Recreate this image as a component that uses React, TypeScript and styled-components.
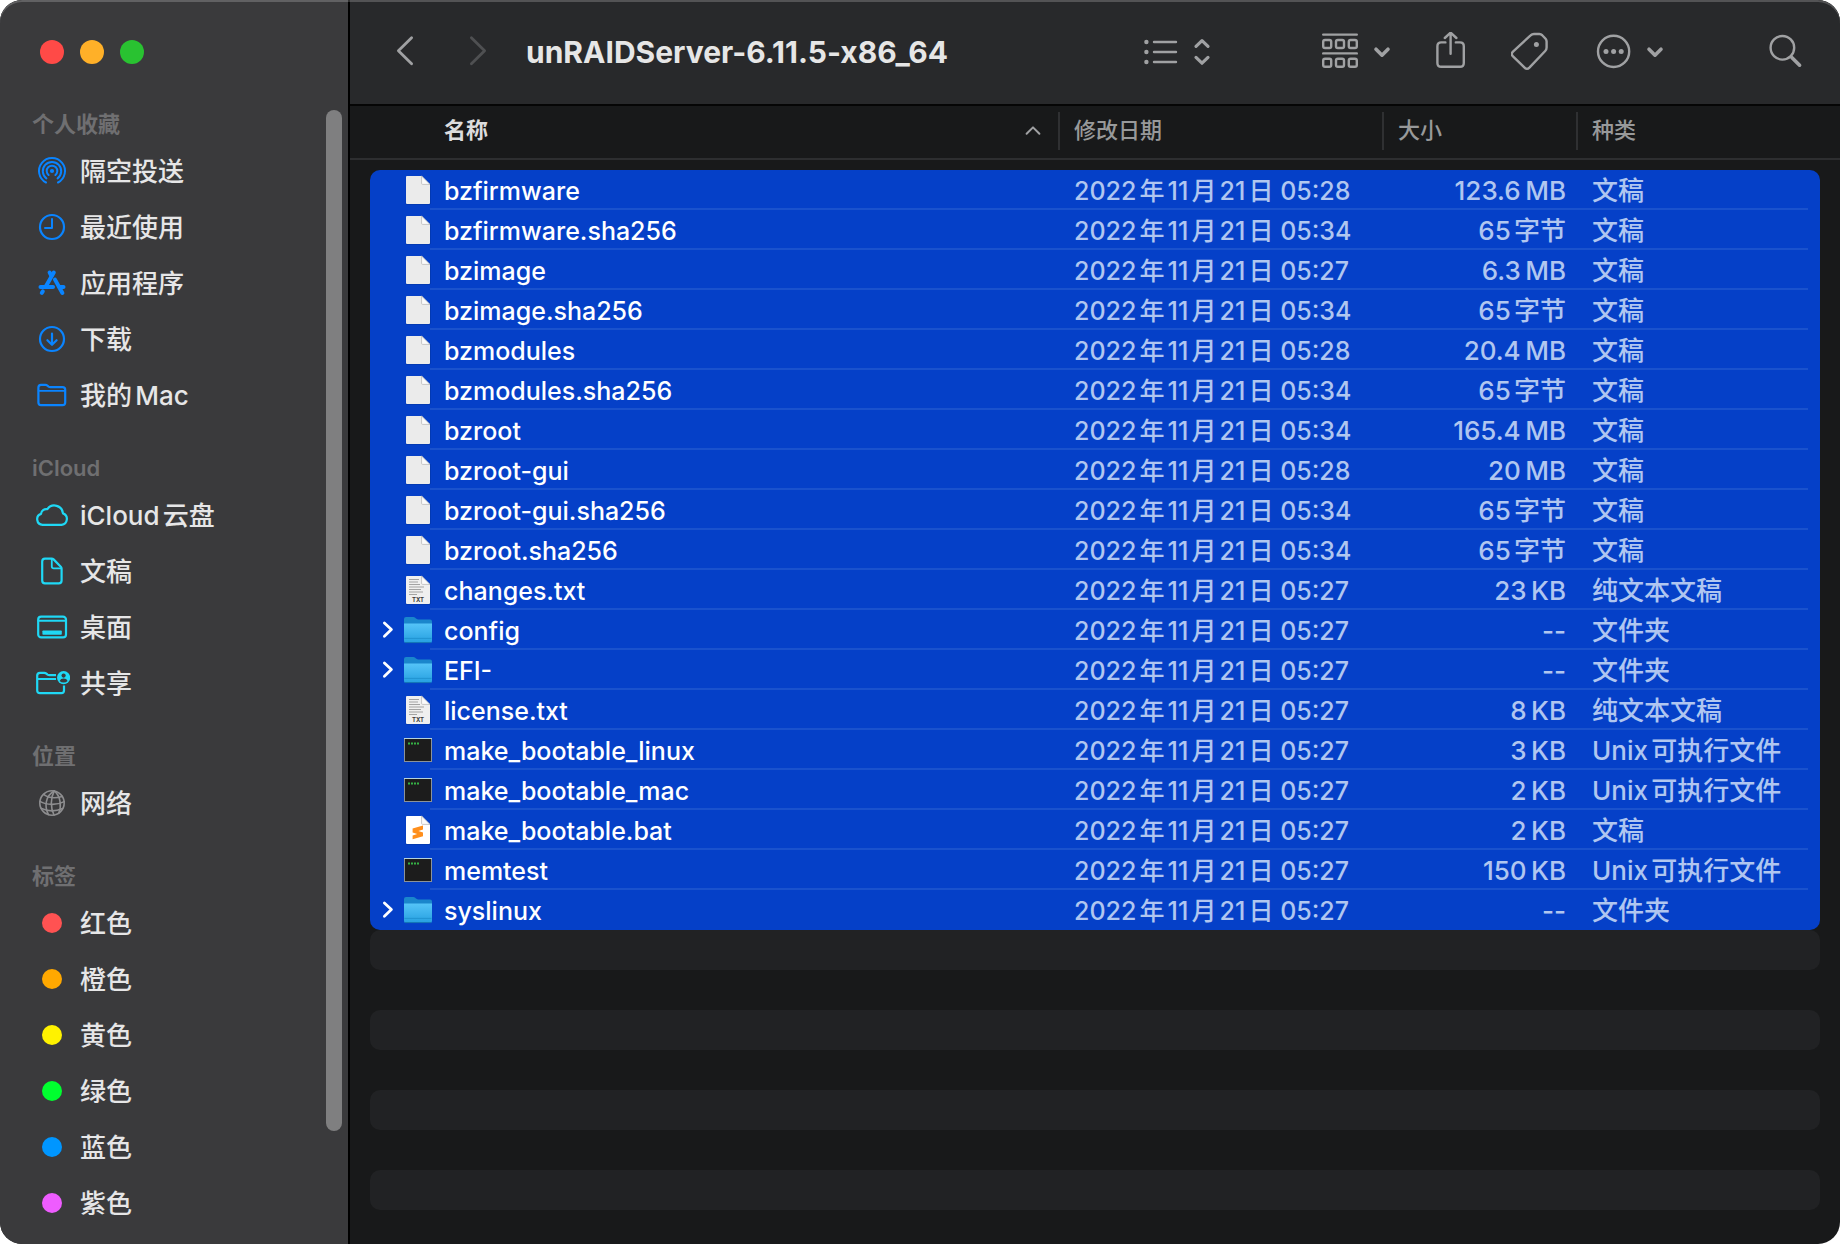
import React from "react";
import styled, { createGlobalStyle } from "styled-components";

const GlobalStyle = createGlobalStyle`
  *, *::before, *::after { box-sizing: border-box; }
  html, body { margin: 0; background: #fff; }
  body {
    font-family: Inter, "Noto Sans CJK SC", sans-serif;
    font-size: 25px;
    text-autospace: normal;
    -webkit-font-smoothing: antialiased;
  }
  button {
    font: inherit;
    color: inherit;
    background: none;
    border: 0;
    margin: 0;
    padding: 0;
    text-align: left;
  }
`;

/* ---------- window ---------- */

const Window = styled.div`
  position: relative;
  display: grid;
  grid-template-columns: 350px minmax(0, 1fr);
  min-height: 100vh;
  border-radius: 22px;
  overflow: hidden;
  background: #18191a;

  &::after {
    content: "";
    position: absolute;
    inset: 0;
    border-radius: inherit;
    box-shadow: inset 0 2px 0 rgba(255, 255, 255, 0.2);
    pointer-events: none;
  }
`;

/* ---------- sidebar ---------- */

const Sidebar = styled.aside`
  display: flex;
  flex-direction: column;
  background: #3a3a3c;
  border-right: 2px solid #000;
`;

const TrafficLights = styled.div`
  display: flex;
  gap: 16px;
  height: 110px;
  padding: 40px 40px 0;
`;

const Light = styled.button<{ $color: string }>`
  width: 24px;
  height: 24px;
  border-radius: 50%;
  background: ${(p) => p.$color};
`;

const SidebarBody = styled.div`
  display: flex;
  flex: 1;
  padding-right: 6px;
`;

const Nav = styled.nav`
  flex: 1;
  display: flex;
  flex-direction: column;
  gap: 31px;
`;

const SectionTitle = styled.h2`
  margin: 0 0 5px;
  padding-left: 32px;
  font-size: 22px;
  font-weight: 600;
  line-height: 28px;
  color: #6f6f71;
`;

const ItemList = styled.ul`
  list-style: none;
  margin: 0;
  padding: 0;
`;

const Item = styled.button`
  display: flex;
  align-items: center;
  gap: 10px;
  width: 100%;
  height: 56px;
  padding-left: 34px;
  font-size: 26px;
  font-weight: 500;
  color: #e6e6e7;
`;

const ItemLabel = styled.span`
  padding-bottom: 4px;
`;

const ItemIcon = styled.svg<{ $color: string }>`
  flex: none;
  width: 36px;
  height: 32px;
  color: ${(p) => p.$color};
  fill: none;
  stroke: currentColor;
  stroke-width: 2.2;
  stroke-linecap: round;
  stroke-linejoin: round;
`;

const TagDot = styled.span<{ $color: string }>`
  flex: none;
  width: 20px;
  height: 20px;
  margin: 0 8px;
  border-radius: 50%;
  background: ${(p) => p.$color};
`;

const ScrollTrack = styled.div`
  width: 16px;
`;

const ScrollThumb = styled.div`
  height: 90%;
  border-radius: 8px;
  background: #7f7f80;
`;

/* ---------- main pane ---------- */

const Main = styled.main`
  display: flex;
  flex-direction: column;
  min-width: 0;
`;

const Toolbar = styled.header`
  display: flex;
  align-items: center;
  height: 106px;
  padding: 0 36px 0 45px;
  background: #28292b;
  border-bottom: 2px solid #050505;
  color: #a0a1a3;
`;

const ToolGroup = styled.div<{ $gap: number }>`
  display: flex;
  align-items: center;
  gap: ${(p) => p.$gap}px;
`;

const ToolButton = styled.button`
  display: flex;
  align-items: center;
  gap: 14px;

  &:disabled {
    color: #4f5052;
  }
`;

const ToolIcon = styled.svg`
  display: block;
  fill: none;
  stroke: currentColor;
  stroke-width: 2.4;
  stroke-linecap: round;
  stroke-linejoin: round;
`;

const Title = styled.h1`
  flex: 1;
  margin: 0 0 0 38px;
  font-size: 30px;
  font-weight: 700;
  line-height: 40px;
  white-space: nowrap;
  color: #e6e6e6;
`;

const TrailingTools = styled.div`
  display: flex;
  align-items: center;
  gap: 104px;
`;

const FileTable = styled.table`
  display: block;
  font-weight: 500;
`;

const columns = "minmax(0, 1fr) 324px 194px 242px";

const TableHead = styled.thead`
  display: block;
  height: 54px;
  padding: 6px 20px 0;
  border-bottom: 2px solid #2d2e30;
`;

const HeadRow = styled.tr`
  display: grid;
  grid-template-columns: ${columns};
`;

const HeadCell = styled.th<{ $active?: boolean }>`
  display: flex;
  align-items: center;
  justify-content: space-between;
  height: 38px;
  padding: ${(p) => (p.$active ? "0 17px 2px 74px" : "0 0 2px 14px")};
  border-right: 2px solid #2f3032;
  font-size: 22px;
  font-weight: ${(p) => (p.$active ? 700 : 500)};
  line-height: 36px;
  color: ${(p) => (p.$active ? "#dcdcdd" : "#98999a")};

  &:last-child {
    border-right: 0;
  }
`;

const TableBody = styled.tbody`
  display: block;
  margin: 10px 20px 0;
  border-radius: 10px;
  background: #0540c8;
`;

const Row = styled.tr`
  display: grid;
  grid-template-columns: ${columns};
  height: 40px;
  background: linear-gradient(#1a52cd, #1a52cd) no-repeat 60px 100% /
    calc(100% - 72px) 2px;

  &:last-child {
    background: none;
  }
`;

const NameCell = styled.td`
  display: flex;
  align-items: center;
  padding: 0 0 0 10px;
  color: #fff;
`;

const FileName = styled.span`
  padding-top: 2px;
  line-height: 38px;
`;

const DisclosureSlot = styled.span`
  display: flex;
  width: 23px;
`;

const Disclosure = styled.button`
  display: flex;
  width: 16px;
  height: 20px;
`;

const FileIcon = styled.svg`
  flex: none;
  width: 30px;
  height: 30px;
  margin-right: 11px;
  overflow: visible;
`;

const Cell = styled.td<{ $align?: "right"; $large?: boolean }>`
  padding: ${(p) => (p.$align ? "2px 12px 0 0" : "2px 0 0 14px")};
  text-align: ${(p) => p.$align ?? "left"};
  font-size: ${(p) => (p.$large ? 26 : 25)}px;
  line-height: 38px;
  white-space: nowrap;
  color: #b0c6f0;
`;

const Stripes = styled.div`
  display: flex;
  flex-direction: column;
  gap: 40px;
  padding: 0 20px;
`;

const Stripe = styled.div`
  height: 40px;
  border-radius: 10px;
  background: #212224;
`;

/* ---------- sidebar icons, drawn around their centre ---------- */

const box = "-18 -16 36 32";
const blue = "#0a84ff";
const cyan = "#1fd8f5";

const sidebarIcons: Record<string, React.ReactNode> = {
  airdrop: (
    <ItemIcon viewBox={box} $color={blue}>
      <g strokeWidth="2">
        <path d="M-6 11.5A13 13 0 1 1 6 11.5" />
        <path d="M-5.6 7.4A9.2 9.2 0 1 1 5.6 7.4" />
        <path d="M-3.4 4A5.3 5.3 0 1 1 3.4 4" />
      </g>
      <circle r="2.1" fill="currentColor" stroke="none" />
    </ItemIcon>
  ),
  recent: (
    <ItemIcon viewBox={box} $color={blue}>
      <circle r="12" />
      <path d="M0 -8V1H-7" strokeWidth="2" />
    </ItemIcon>
  ),
  apps: (
    <ItemIcon viewBox={box} $color={blue}>
      <g strokeWidth="4">
        <path d="M1.8 -10.4L-6.5 4" />
        <path d="M-2.4 -10.4L-0.6 -7.2" />
        <path d="M3 -3.4L10.4 10" />
        <path d="M-11.5 4H1" />
        <path d="M7.4 4H11.5" />
        <path d="M-10.2 9.8L-9.2 8.4" />
      </g>
    </ItemIcon>
  ),
  downloads: (
    <ItemIcon viewBox={box} $color={blue}>
      <circle r="12" />
      <path d="M0 -5.5V5.6M-4.6 1.2L0 5.8L4.6 1.2" />
    </ItemIcon>
  ),
  folder: (
    <ItemIcon viewBox={box} $color={blue}>
      <path d="M-13.6 -7.5Q-13.6 -10.2 -11 -10.2H-6.6Q-5.4 -10.2 -4.4 -9.3L-3.4 -8.4Q-2.6 -7.8 -1.4 -7.8H10.6Q13.2 -7.8 13.2 -5.2V7.6Q13.2 10.2 10.6 10.2H-11Q-13.6 10.2 -13.6 7.6Z" />
      <path d="M-13.4 -4.2H13" strokeWidth="1.8" />
    </ItemIcon>
  ),
  cloud: (
    <ItemIcon viewBox={box} $color={cyan}>
      <path d="M-9.4 9.8A5.6 5.6 0 0 1 -11 -1.1A5.2 5.2 0 0 1 -4.6 -5.8A8.6 8.6 0 0 1 11 -1.6A5.9 5.9 0 0 1 9.6 9.8Z" />
    </ItemIcon>
  ),
  document: (
    <ItemIcon viewBox={box} $color={cyan}>
      <path d="M-9.8 -9.6Q-9.8 -12.4 -7 -12.4H-0.4Q0.8 -12.4 1.6 -11.6L8.8 -4.2Q9.6 -3.4 9.6 -2.2V9.6Q9.6 12.4 6.8 12.4H-7Q-9.8 12.4 -9.8 9.6Z" />
      <path d="M-0.2 -12V-4.6Q-0.2 -2.6 1.8 -2.6H9.2" strokeWidth="1.8" />
    </ItemIcon>
  ),
  desktop: (
    <ItemIcon viewBox={box} $color={cyan}>
      <rect x="-13.8" y="-10.4" width="27.8" height="20.8" rx="3" />
      <path d="M-13.6 -6.2H13.8" strokeWidth="2" />
      <rect x="-9.6" y="3.4" width="19.4" height="4.4" rx="0.8" fill="currentColor" stroke="none" />
    </ItemIcon>
  ),
  shared: (
    <ItemIcon viewBox={box} $color={cyan}>
      <path d="M4 -7.8H-2.4Q-3.6 -7.8 -4.4 -8.4L-5.6 -9.4Q-6.6 -10.2 -7.8 -10.2H-12Q-14.8 -10.2 -14.8 -7.4V7.6Q-14.8 10.2 -12 10.2H9.4Q12 10.2 12 7.6V2.4" strokeLinecap="butt" />
      <path d="M-14.6 -4H4" strokeWidth="2" strokeLinecap="butt" />
      <circle cx="11.6" cy="-5.4" r="6.6" fill="currentColor" stroke="none" />
      <circle cx="11.6" cy="-7.4" r="2.1" fill="#3a3a3c" stroke="none" />
      <path d="M7.6 -2.1Q8.6 -4.4 11.6 -4.4Q14.6 -4.4 15.6 -2.1Q14 -0.4 11.6 -0.4Q9.2 -0.4 7.6 -2.1Z" fill="#3a3a3c" stroke="none" />
    </ItemIcon>
  ),
  network: (
    <ItemIcon viewBox={box} $color="#8e8e90">
      <g strokeWidth="1.6">
        <circle r="12.2" />
        <path d="M2.2 -12C-7 -7 -7.6 4 -3.6 11.6" />
        <path d="M2.2 -12C-1.6 -5 -1.6 5 2 12" />
        <path d="M2.2 -12C9 -7 9.4 4 6.8 10" />
        <path d="M-8.4 -8.6C-3 -4.6 5 -5 10.2 -6.6" />
        <path d="M-12 -1.6C-5 2.6 6 2 12.2 -1.4" />
        <path d="M-10.6 5.4C-4 8.6 4 8.4 10.6 5.6" />
      </g>
    </ItemIcon>
  ),
};

/* ---------- toolbar icons ---------- */

const ChevronDown = () => (
  <ToolIcon width="18" height="40" viewBox="0 0 18 40">
    <path d="M3 17.2L9 23.2L15 17.2" strokeWidth="3.6" />
  </ToolIcon>
);

const ListIcon = () => (
  <ToolIcon width="36" height="40" viewBox="0 0 36 40">
    <path d="M11 10H33M11 20H33M11 30H33" />
    <g fill="currentColor" stroke="none">
      <circle cx="3.4" cy="10" r="2.2" />
      <circle cx="3.4" cy="20" r="2.2" />
      <circle cx="3.4" cy="30" r="2.2" />
    </g>
  </ToolIcon>
);

const UpDownIcon = () => (
  <ToolIcon width="18" height="40" viewBox="0 0 18 40">
    <path d="M3 14.4L9 8.6L15 14.4M3 25.4L9 31.2L15 25.4" strokeWidth="3.2" />
  </ToolIcon>
);

const GroupIcon = () => (
  <ToolIcon width="38" height="40" viewBox="0 0 38 40">
    <path d="M2.2 2.6H35.8M2.2 21.4H35.8" />
    {[8, 26.8].map((y) =>
      [2.2, 15, 27.8].map((x) => (
        <rect key={`${x}-${y}`} x={x} y={y} width="8" height="8" rx="1.8" />
      )),
    )}
  </ToolIcon>
);

const ShareIcon = () => (
  <ToolIcon width="32" height="40" viewBox="0 0 32 40">
    <path d="M10.4 10.4H6.2Q2.4 10.4 2.4 14.2V31Q2.4 34.8 6.2 34.8H25Q28.8 34.8 28.8 31V14.2Q28.8 10.4 25 10.4H20.8" />
    <path d="M15.6 21.8V1.2M9.8 6L15.6 0.6L21.4 6" />
  </ToolIcon>
);

const TagIcon = () => (
  <ToolIcon width="41" height="40" viewBox="0 0 41 40">
    <path d="M19.6 3.4Q21 2 23 2H28.4Q30 2 31.2 3.2L34.6 6.8Q35.6 8 35.6 9.6V15.6Q35.6 17.6 34.2 19L18.4 35.6Q16 38 13.6 35.6L2 24.4Q-0.4 22 2 19.6Z" />
    <circle cx="25.4" cy="12.4" r="2.5" fill="currentColor" stroke="none" />
  </ToolIcon>
);

const MoreIcon = () => (
  <ToolIcon width="36" height="40" viewBox="0 0 36 40">
    <circle cx="17.6" cy="19.4" r="15.6" />
    <g fill="currentColor" stroke="none">
      <circle cx="10" cy="19.4" r="2.5" />
      <circle cx="17.6" cy="19.4" r="2.5" />
      <circle cx="25.2" cy="19.4" r="2.5" />
    </g>
  </ToolIcon>
);

const SearchIcon = () => (
  <ToolIcon width="36" height="40" viewBox="0 0 36 40">
    <circle cx="14.4" cy="15.8" r="11.8" />
    <path d="M23.8 25.4L31.6 33.2" strokeWidth="3.6" />
  </ToolIcon>
);

const BackIcon = () => (
  <ToolIcon width="20" height="40" viewBox="0 0 20 40">
    <path d="M16.6 5.8L3.4 18.8L16.6 31.8" strokeWidth="2.8" />
  </ToolIcon>
);

const ForwardIcon = () => (
  <ToolIcon width="20" height="40" viewBox="0 0 20 40">
    <path d="M3.4 5.8L16.6 18.8L3.4 31.8" strokeWidth="2.8" />
  </ToolIcon>
);

const SortIcon = () => (
  <ToolIcon width="16" height="12" viewBox="0 0 16 12">
    <path d="M1.6 9.8L8 3.4L14.4 9.8" stroke="#a0a1a3" strokeWidth="2" />
  </ToolIcon>
);

/* ---------- file icons ---------- */

type Kind = "doc" | "txt" | "folder" | "exec" | "sublime";

const Page = ({ fill }: { fill: string }) => (
  <>
    <path d="M3.4 2V29H27V9" fill="none" stroke="#02246f" strokeOpacity="0.5" />
    <path d="M3 1.6Q3 1 4 1H18.6L27 9.4V28Q27 29 26 29H4Q3 29 3 28Z" fill={fill} />
    <path d="M18.6 1V8.4Q18.6 9.4 19.6 9.4H27Z" fill="#fbfbfb" stroke="#b9b9b9" strokeWidth="0.8" />
  </>
);

const fileIcons: Record<Kind, React.ReactNode> = {
  doc: (
    <FileIcon viewBox="0 0 30 30">
      <Page fill="#ebebeb" />
    </FileIcon>
  ),
  txt: (
    <FileIcon viewBox="0 0 30 30">
      <Page fill="#efefef" />
      <path
        d="M6 4.5H16M6 7H15M6 9.5H17M6 12H21M6 14.5H18M6 17H20M6 19.5H14"
        stroke="#a3a3a3"
        strokeWidth="1.1"
      />
      <text x="15" y="26.6" textAnchor="middle" fontSize="6" fontWeight="700" fill="#3c3c3c">
        TXT
      </text>
    </FileIcon>
  ),
  folder: (
    <FileIcon viewBox="0 0 30 30">
      <defs>
        <linearGradient id="folderFront" x1="0" y1="0" x2="0" y2="1">
          <stop offset="0" stopColor="#55c4f8" />
          <stop offset="1" stopColor="#259fe0" />
        </linearGradient>
      </defs>
      <path d="M1 4Q1 2 3 2H10.4Q11.4 2 12.2 2.8L13 3.6Q13.8 4.4 15 4.4H27Q29 4.4 29 6.4V26H1Z" fill="#1a86cc" />
      <path d="M1 8.6H29V26Q29 28 27 28H3Q1 28 1 26Z" fill="url(#folderFront)" />
      <path d="M1.4 23.4H28.6" stroke="#1d8ecb" strokeWidth="0.8" />
      <path d="M2 27.6H28" stroke="#1272b4" strokeWidth="1" />
    </FileIcon>
  ),
  exec: (
    <FileIcon viewBox="0 0 30 30">
      <rect x="1.5" y="3.5" width="27" height="23" fill="#1c1c1c" stroke="#8b9299" />
      <path d="M1 3.5H29" stroke="#b4d2dc" />
      <path d="M5 8.6H16" stroke="#35b045" strokeWidth="2" strokeDasharray="2 1" />
    </FileIcon>
  ),
  sublime: (
    <FileIcon viewBox="0 0 30 30">
      <Page fill="#ffffff" />
      <path
        d="M9.6 13.6L20 10.6V14.4L15.4 16L20 17.4V21.2L9.6 24.2V20.4L14.2 18.9L9.6 17.4Z"
        fill="#ff8f1c"
      />
    </FileIcon>
  ),
};

/* ---------- data ---------- */

const tags: [string, string][] = [
  ["红色", "#ff5252"],
  ["橙色", "#ffa800"],
  ["黄色", "#fff200"],
  ["绿色", "#00ff2f"],
  ["蓝色", "#0096ff"],
  ["紫色", "#ee5cff"],
];

const sections: { title: string; items: [string, React.ReactNode][] }[] = [
  {
    title: "个人收藏",
    items: [
      ["隔空投送", sidebarIcons.airdrop],
      ["最近使用", sidebarIcons.recent],
      ["应用程序", sidebarIcons.apps],
      ["下载", sidebarIcons.downloads],
      ["我的Mac", sidebarIcons.folder],
    ],
  },
  {
    title: "iCloud",
    items: [
      ["iCloud云盘", sidebarIcons.cloud],
      ["文稿", sidebarIcons.document],
      ["桌面", sidebarIcons.desktop],
      ["共享", sidebarIcons.shared],
    ],
  },
  { title: "位置", items: [["网络", sidebarIcons.network]] },
  {
    title: "标签",
    items: tags.map(([name, color]) => [name, <TagDot key={name} $color={color} />]),
  },
];

const files: [string, Kind, string, string, string][] = [
  ["bzfirmware", "doc", "05:28", "123.6\u2009MB", "文稿"],
  ["bzfirmware.sha256", "doc", "05:34", "65字节", "文稿"],
  ["bzimage", "doc", "05:27", "6.3\u2009MB", "文稿"],
  ["bzimage.sha256", "doc", "05:34", "65字节", "文稿"],
  ["bzmodules", "doc", "05:28", "20.4\u2009MB", "文稿"],
  ["bzmodules.sha256", "doc", "05:34", "65字节", "文稿"],
  ["bzroot", "doc", "05:34", "165.4\u2009MB", "文稿"],
  ["bzroot-gui", "doc", "05:28", "20\u2009MB", "文稿"],
  ["bzroot-gui.sha256", "doc", "05:34", "65字节", "文稿"],
  ["bzroot.sha256", "doc", "05:34", "65字节", "文稿"],
  ["changes.txt", "txt", "05:27", "23\u2009KB", "纯文本文稿"],
  ["config", "folder", "05:27", "--", "文件夹"],
  ["EFI-", "folder", "05:27", "--", "文件夹"],
  ["license.txt", "txt", "05:27", "8\u2009KB", "纯文本文稿"],
  ["make_bootable_linux", "exec", "05:27", "3\u2009KB", "Unix可执行文件"],
  ["make_bootable_mac", "exec", "05:27", "2\u2009KB", "Unix可执行文件"],
  ["make_bootable.bat", "sublime", "05:27", "2\u2009KB", "文稿"],
  ["memtest", "exec", "05:27", "150\u2009KB", "Unix可执行文件"],
  ["syslinux", "folder", "05:27", "--", "文件夹"],
];

export default function App() {
  return (
    <>
      <GlobalStyle />
      <Window>
        <Sidebar>
          <TrafficLights>
            <Light $color="#ff4a47" aria-label="关闭" />
            <Light $color="#ffb028" aria-label="最小化" />
            <Light $color="#29c231" aria-label="缩放" />
          </TrafficLights>
          <SidebarBody>
            <Nav>
              {sections.map((section) => (
                <section key={section.title}>
                  <SectionTitle>{section.title}</SectionTitle>
                  <ItemList>
                    {section.items.map(([name, icon]) => (
                      <li key={name}>
                        <Item>
                          {icon}
                          <ItemLabel>{name}</ItemLabel>
                        </Item>
                      </li>
                    ))}
                  </ItemList>
                </section>
              ))}
            </Nav>
            <ScrollTrack>
              <ScrollThumb />
            </ScrollTrack>
          </SidebarBody>
        </Sidebar>

        <Main>
          <Toolbar>
            <ToolGroup $gap={53}>
              <ToolButton aria-label="后退">
                <BackIcon />
              </ToolButton>
              <ToolButton aria-label="前进" disabled>
                <ForwardIcon />
              </ToolButton>
            </ToolGroup>
            <Title>unRAIDServer-6.11.5-x86_64</Title>
            <TrailingTools>
              <ToolGroup $gap={110}>
                <ToolButton aria-label="显示方式">
                  <ListIcon />
                  <UpDownIcon />
                </ToolButton>
                <ToolGroup $gap={44}>
                  <ToolButton aria-label="分组">
                    <GroupIcon />
                    <ChevronDown />
                  </ToolButton>
                  <ToolButton aria-label="共享">
                    <ShareIcon />
                  </ToolButton>
                  <ToolButton aria-label="标签">
                    <TagIcon />
                  </ToolButton>
                  <ToolButton aria-label="更多操作">
                    <MoreIcon />
                    <ChevronDown />
                  </ToolButton>
                </ToolGroup>
              </ToolGroup>
              <ToolButton aria-label="搜索">
                <SearchIcon />
              </ToolButton>
            </TrailingTools>
          </Toolbar>

          <FileTable>
            <TableHead>
              <HeadRow>
                <HeadCell scope="col" $active>
                  名称
                  <SortIcon />
                </HeadCell>
                <HeadCell scope="col">修改日期</HeadCell>
                <HeadCell scope="col">大小</HeadCell>
                <HeadCell scope="col">种类</HeadCell>
              </HeadRow>
            </TableHead>
            <TableBody>
              {files.map(([name, kind, time, size, label]) => (
                <Row key={name}>
                  <NameCell>
                    <DisclosureSlot>
                      {kind === "folder" && (
                        <Disclosure aria-label={`展开 ${name}`}>
                          <ToolIcon width="16" height="20" viewBox="0 0 16 20">
                            <path d="M4.4 3L11.4 9.6L4.4 16.2" strokeWidth="2.8" />
                          </ToolIcon>
                        </Disclosure>
                      )}
                    </DisclosureSlot>
                    {fileIcons[kind]}
                    <FileName>{name}</FileName>
                  </NameCell>
                  <Cell>{`2022年11月21日 ${time}`}</Cell>
                  <Cell $align="right" $large>
                    {size}
                  </Cell>
                  <Cell $large>{label}</Cell>
                </Row>
              ))}
            </TableBody>
          </FileTable>
          <Stripes>
            {[0, 1, 2, 3].map((n) => (
              <Stripe key={n} />
            ))}
          </Stripes>
        </Main>
      </Window>
    </>
  );
}
